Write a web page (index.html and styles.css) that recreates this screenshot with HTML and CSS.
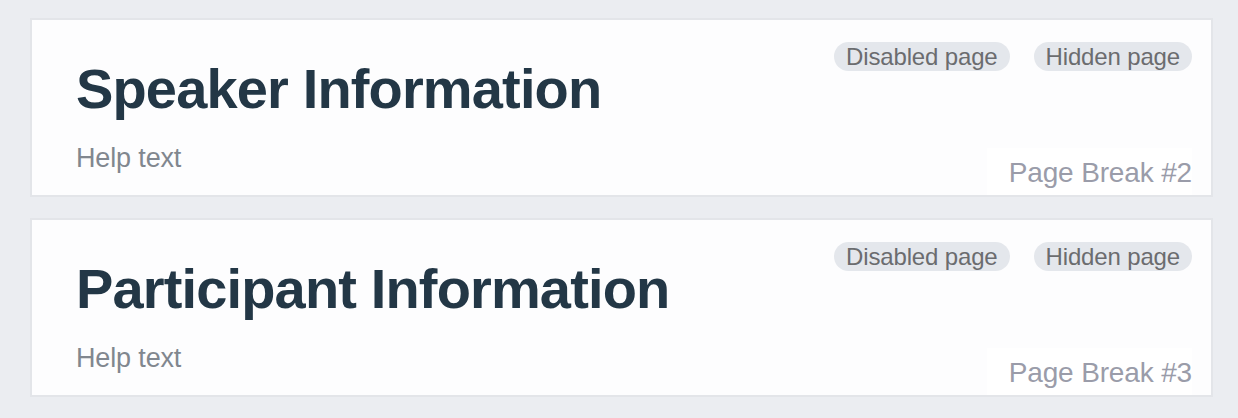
FILE: index.html
```html
<!DOCTYPE html>
<html>
<head>
<meta charset="utf-8">
<link rel="stylesheet" href="styles.css">
</head>
<body>
<div class="pages">
  <section class="card">
    <div class="top">
      <h2 class="title">Speaker Information</h2>
      <div class="badges">
        <span class="badge">Disabled page</span>
        <span class="badge">Hidden page</span>
      </div>
    </div>
    <div class="bottom">
      <p class="help">Help text</p>
      <span class="label">Page Break #2</span>
    </div>
  </section>
  <section class="card">
    <div class="top">
      <h2 class="title">Participant Information</h2>
      <div class="badges">
        <span class="badge">Disabled page</span>
        <span class="badge">Hidden page</span>
      </div>
    </div>
    <div class="bottom">
      <p class="help">Help text</p>
      <span class="label">Page Break #3</span>
    </div>
  </section>
</div>
</body>
</html>
```
FILE: styles.css
```css
html, body {
  margin: 0;
  padding: 0;
  background: #ebedf1;
  font-family: "Liberation Sans", Arial, Helvetica, sans-serif;
}
.pages {
  display: flex;
  flex-direction: column;
  gap: 21px;
  padding: 18px 25px 0 30px;
}
.card {
  box-sizing: border-box;
  height: 179px;
  background: #fdfdfe;
  border: 2px solid #e3e5e9;
  padding: 22px 19px 0 44px;
  display: flex;
  flex-direction: column;
}
.top {
  display: flex;
  justify-content: space-between;
  align-items: flex-start;
}
.title {
  margin: 15px 0 0 0;
  font-size: 56px;
  line-height: 64px;
  font-weight: 700;
  letter-spacing: -0.85px;
  color: #233746;
}
.badges {
  display: flex;
  gap: 24px;
}
.badge {
  display: block;
  height: 29px;
  line-height: 29px;
  padding: 0 12px;
  border-radius: 15px;
  background: #e4e7ec;
  color: #6b6c6f;
  font-size: 24px;
  letter-spacing: -0.15px;
}
.bottom {
  margin-top: 21px;
  display: flex;
  justify-content: space-between;
  align-items: flex-start;
}
.help {
  margin: 0;
  font-size: 27px;
  line-height: 32px;
  letter-spacing: -0.15px;
  color: #81878f;
}
.label {
  margin-top: 6px;
  padding: 9px 0 6px 22px;
  background: #ffffff;
  font-size: 28px;
  line-height: 32px;
  letter-spacing: -0.15px;
  color: #9a9ca9;
}
```
